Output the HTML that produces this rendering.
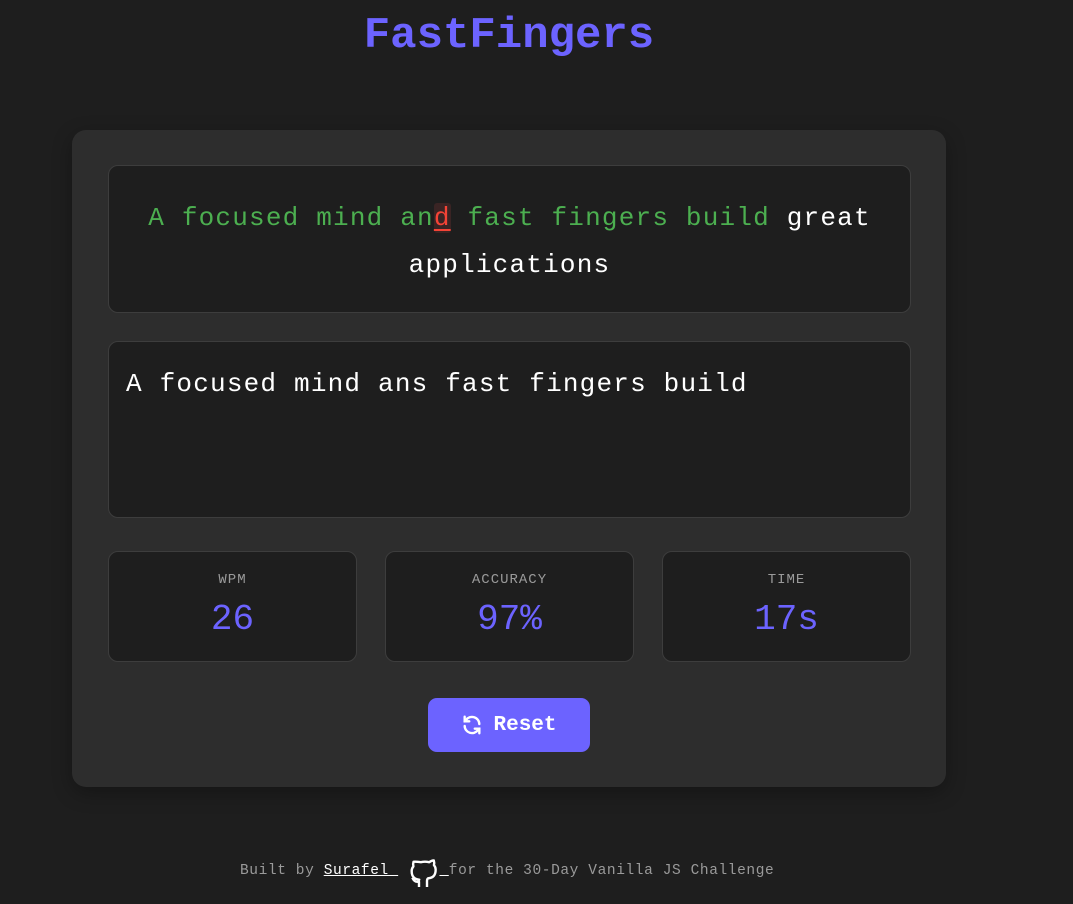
<!DOCTYPE html>
<html><head><meta charset="utf-8"><style>
*{box-sizing:border-box;margin:0;padding:0}
body{width:1073px;height:904px;background:#1e1e1e;font-family:"Liberation Mono",monospace;color:#fff;position:relative;overflow:hidden}
h1{position:absolute;top:8px;left:0;width:1018px;text-align:center;font-size:44px;font-weight:bold;color:#6c63ff;line-height:56px}
.card{position:absolute;left:72px;top:130px;width:874px;height:657px;background:#2d2d2d;border-radius:14px;box-shadow:0 6px 20px rgba(0,0,0,.3)}
.box{position:absolute;left:36px;width:803px;background:#1e1e1e;border:1px solid #3d3d3d;border-radius:10px}
.quote{top:35px;height:148px;padding-top:29px;text-align:center;font-size:26px;letter-spacing:1.2px;line-height:47px}
.g{color:#4caf50}.r{color:#f44336;background:#3a2424;text-decoration:underline;text-underline-offset:4px;border-radius:3px}
.inp{top:211px;height:177px;padding:18px 17px;font-size:26px;letter-spacing:1.2px;line-height:48px}
.stat{position:absolute;top:421px;width:249px;height:111px;background:#1e1e1e;border:1px solid #3d3d3d;border-radius:10px;text-align:center}
.stat .l{margin-top:20px;font-size:14px;color:#9a9a9a;letter-spacing:1px;line-height:16px}
.stat .v{margin-top:12px;font-size:36px;color:#6c63ff;line-height:40px}
.btn{position:absolute;left:356px;top:568px;width:162px;height:54px;background:#6c63ff;border-radius:9px;display:flex;align-items:center;justify-content:center;gap:10px;font-size:21px;font-weight:bold;letter-spacing:0}
.foot{position:absolute;top:853px;left:240px;font-size:14.5px;color:#9a9a9a;letter-spacing:0.6px;white-space:nowrap;display:flex;align-items:center}
.foot u{color:#fff}
</style></head><body>
<h1>FastFingers</h1>
<div class="card">
<div class="box quote"><span class="g">A focused mind an</span><span class="r">d</span><span class="g"> fast fingers build</span> great<br>applications</div>
<div class="box inp">A focused mind ans fast fingers build</div>
<div class="stat" style="left:36px"><div class="l">WPM</div><div class="v">26</div></div>
<div class="stat" style="left:313px"><div class="l">ACCURACY</div><div class="v">97%</div></div>
<div class="stat" style="left:590px"><div class="l">TIME</div><div class="v">17s</div></div>
<div class="btn"><svg width="22" height="22" viewBox="0 0 24 24" fill="none" stroke="#fff" stroke-width="2.6" stroke-linecap="round"><path d="M20 11A8 8 0 0 0 5.5 6.5L4 8"/><path d="M4 3v5h5"/><path d="M4 13a8 8 0 0 0 14.5 4.5L20 16"/><path d="M20 21v-5h-5"/></svg>Reset</div>
</div>
<div class="foot">Built by&nbsp;<u>Surafel&nbsp;</u>&nbsp;<svg width="32" height="36" viewBox="0 0 24 26" fill="none" stroke="#fff" stroke-width="1.8" stroke-linejoin="round"><path d="M9 25v-4c-3 .5-4-1-5-3M15 25v-4.5c0-1 .3-1.6.8-2 3-.4 5.7-1.5 5.7-6.5 0-1.3-.5-2.5-1.3-3.4.3-1 .3-2.3-.1-3.5 0 0-1.1-.3-3.5 1.3a12 12 0 0 0-6.2 0C6 5.8 4.9 6.1 4.9 6.1c-.4 1.2-.4 2.5-.1 3.5C4 10.5 3.5 11.7 3.5 13c0 5 2.7 6.1 5.7 6.5-.5.4-.8 1.1-.8 2"/></svg><u>&nbsp;</u>for the 30-Day Vanilla JS Challenge</div>
</body></html>
